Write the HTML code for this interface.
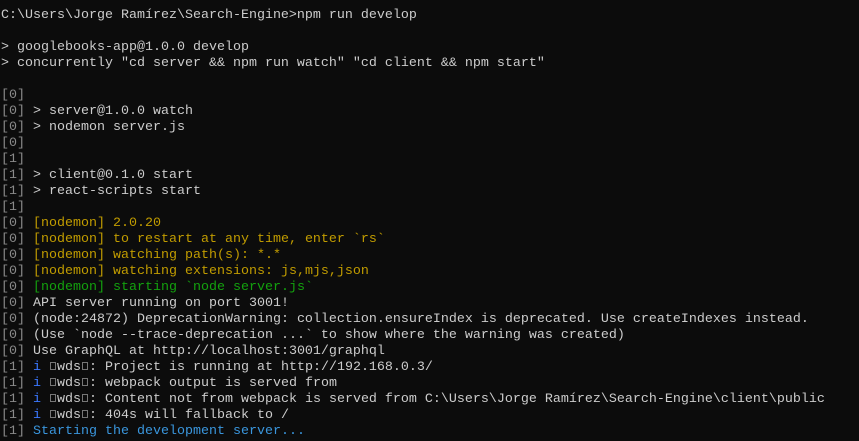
<!DOCTYPE html>
<html><head><meta charset="utf-8"><style>
html,body{margin:0;padding:0;background:#0c0c0c;width:859px;height:441px;overflow:hidden}
pre{margin:0;padding:8px 0 0 1px;font-family:"Liberation Mono","DejaVu Sans Mono",monospace;font-size:13.33px;line-height:16px;color:#cccccc;white-space:pre}
.p{color:#8a8a8a}.y{color:#c19c00}.g{color:#13a10e}.b{color:#3b78ff}.c{color:#3a96dd}
.x{display:inline-block;width:8px;height:8px;position:relative;vertical-align:baseline}
.x::after{content:"";position:absolute;left:1px;top:0;width:6px;height:8px;border:1px solid #777;box-sizing:border-box}
</style></head><body><pre>C:\Users\Jorge Ramírez\Search-Engine>npm run develop

&gt; googlebooks-app@1.0.0 develop
&gt; concurrently "cd server &amp;&amp; npm run watch" "cd client &amp;&amp; npm start"

<span class="p">[0]</span>
<span class="p">[0]</span> &gt; server@1.0.0 watch
<span class="p">[0]</span> &gt; nodemon server.js
<span class="p">[0]</span>
<span class="p">[1]</span>
<span class="p">[1]</span> &gt; client@0.1.0 start
<span class="p">[1]</span> &gt; react-scripts start
<span class="p">[1]</span>
<span class="p">[0]</span> <span class="y">[nodemon] 2.0.20</span>
<span class="p">[0]</span> <span class="y">[nodemon] to restart at any time, enter `rs`</span>
<span class="p">[0]</span> <span class="y">[nodemon] watching path(s): *.*</span>
<span class="p">[0]</span> <span class="y">[nodemon] watching extensions: js,mjs,json</span>
<span class="p">[0]</span> <span class="g">[nodemon] starting `node server.js`</span>
<span class="p">[0]</span> API server running on port 3001!
<span class="p">[0]</span> (node:24872) DeprecationWarning: collection.ensureIndex is deprecated. Use createIndexes instead.
<span class="p">[0]</span> (Use `node --trace-deprecation ...` to show where the warning was created)
<span class="p">[0]</span> Use GraphQL at http://localhost:3001/graphql
<span class="p">[1]</span> <span class="b">i</span> <span class="x"></span>wds<span class="x"></span>: Project is running at http://192.168.0.3/
<span class="p">[1]</span> <span class="b">i</span> <span class="x"></span>wds<span class="x"></span>: webpack output is served from
<span class="p">[1]</span> <span class="b">i</span> <span class="x"></span>wds<span class="x"></span>: Content not from webpack is served from C:\Users\Jorge Ramírez\Search-Engine\client\public
<span class="p">[1]</span> <span class="b">i</span> <span class="x"></span>wds<span class="x"></span>: 404s will fallback to /
<span class="p">[1]</span> <span class="c">Starting the development server...</span>
</pre></body></html>
